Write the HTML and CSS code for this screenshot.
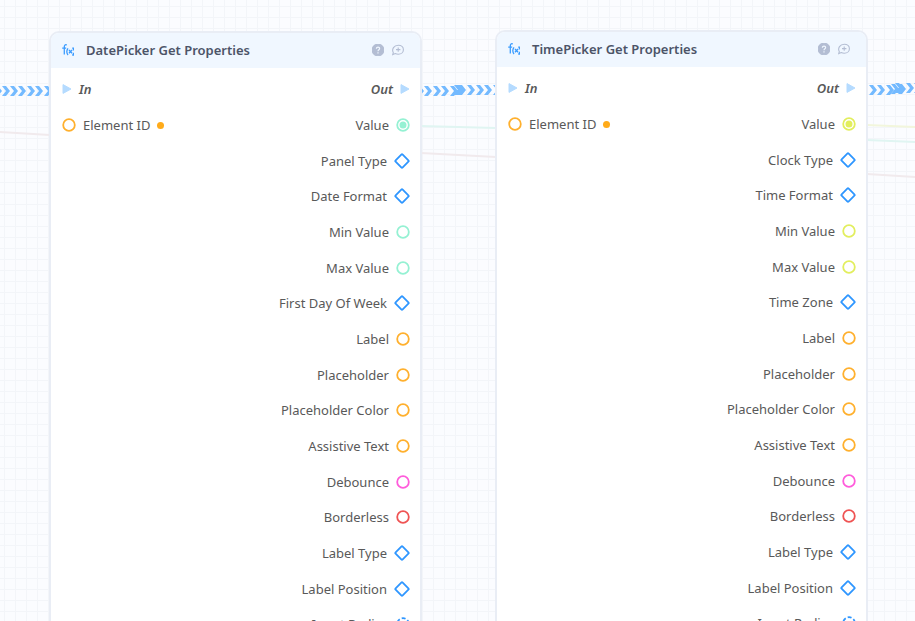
FILE: index.html
```
<!DOCTYPE html>
<html lang="en">
    <head>
        <meta charset="UTF-8">
        <meta name="viewport" content="width=device-width, initial-scale=1.0">
        <title>Blueprint</title>
        <link rel="stylesheet" href="styles.css">
    </head>
    <body>
        <!-- shared icons -->
        <svg class="defs" aria-hidden="true">
            <symbol id="fx" viewBox="0 0 12 12">
                <path d="M4.8.9C2.9.4 2.3 1.4 2.3 2.8v7.6M.2 4.2h4M6 4.4c-1.3 1.8-1.3 4.8 0 6.6M10.2 4.2h1.2v2.2M10.2 11h1.2V8.8M7 6l3 3.2M10 6l-3 3.2"/>
            </symbol>
            <symbol id="help" viewBox="0 0 12 12">
                <circle cx="6" cy="6" r="5.8" fill="#b3bdd3"/>
                <path d="M4.4 4.8C4.4 2.6 7.7 2.7 7.6 4.7 7.5 5.8 6 5.8 6 7.2M6 8.2v1.2" fill="none" stroke="#f0f7ff" stroke-width="1.2"/>
            </symbol>
            <symbol id="comment" viewBox="0 0 12 12">
                <path d="M.7 10.6l.6-2C-.6 5.2 2 1.2 6.3 1.2c3 0 5.1 2 5.1 4.5s-2.1 4.5-5.1 4.5c-1.3 0-2.2-.2-3-.6zM6.2 3.4v4.4M4 5.6h4.4"/>
            </symbol>
            <symbol id="flow" viewBox="0 0 10 12">
                <path d="M1 1.6v8.8L9 6z" fill="#b5dbff" stroke="#b5dbff" stroke-linejoin="round"/>
            </symbol>
            <symbol id="ring" viewBox="0 0 14 14">
                <circle cx="7" cy="7" r="5.8"/>
            </symbol>
            <symbol id="linked" viewBox="0 0 14 14">
                <circle cx="7" cy="7" r="5.8"/>
                <circle cx="7" cy="7" r="2.6" fill="currentColor"/>
            </symbol>
            <symbol id="diamond" viewBox="0 0 16 16">
                <rect x="3" y="3" width="10" height="10" rx="1" transform="rotate(45 8 8)"/>
            </symbol>
            <symbol id="dashed" viewBox="0 0 14 14">
                <circle cx="7" cy="7" r="5.8" stroke-dasharray="4 2.07" stroke-dashoffset="-1"/>
            </symbol>
        </svg>

        <main class="canvas">
            <svg class="wires" width="915" height="621" aria-hidden="true">
                <g class="links">
                    <path d="M0 132l50 3M421 153l75 4M867 174l48 3" stroke="#f1eaed"/>
                    <path d="M421 126l75 2M867 140l48 2" stroke="#e0f5f2"/>
                    <path d="M867 125l48 2" stroke="#f2f6dc"/>
                </g>
                <g class="chevrons">
                    <path d="M-6 86h4l4 5-4 5h-4l4-5zM2 86h4l4 5-4 5h-4l4-5zM10 86h4l4 5-4 5h-4l4-5zM18 86h4l4 5-4 5h-4l4-5zM27 86h4l4 5-4 5h-4l4-5zM35 86h4l4 5-4 5h-4l4-5zM44 86h4l4 5-4 5h-4l4-5z"/>
                    <path d="M416 86h4l4 5-4 5h-4l4-5zM424 86h4l4 5-4 5h-4l4-5zM433 86h4l4 5-4 5h-4l4-5zM441 86h4l4 5-4 5h-4l4-5zM450 86h4l4 5-4 5h-4l4-5zM454 85h4l4 5-4 5h-4l4-5zM458 85h4l4 5-4 5h-4l4-5zM467 85h4l4 5-4 5h-4l4-5zM476 85h4l4 5-4 5h-4l4-5zM484 85h4l4 5-4 5h-4l4-5zM493 85h4l4 5-4 5h-4l4-5z"/>
                    <path d="M869 85h4l4 5-4 5h-4l4-5zM877 85h4l4 5-4 5h-4l4-5zM886 85h4l4 5-4 5h-4l4-5zM891 84h4l4 5-4 5h-4l4-5zM895 83h4l4 5-4 5h-4l4-5zM898 84h4l4 5-4 5h-4l4-5zM906 83h4l4 5-4 5h-4l4-5zM914 83h4l4 5-4 5h-4l4-5z"/>
                </g>
            </svg>

            <section class="node date-node">
                <header class="node-header">
                    <svg class="fx"><use href="#fx"/></svg>
                    <h2>DatePicker Get Properties</h2>
                    <button class="tool" aria-label="Help"><svg><use href="#help"/></svg></button>
                    <button class="tool" aria-label="Add comment"><svg><use href="#comment"/></svg></button>
                </header>
                <div class="ports">
                    <ul class="inputs">
                        <li class="exec"><svg class="arrow"><use href="#flow"/></svg>In</li>
                        <li class="orange"><svg class="pin"><use href="#ring"/></svg>Element ID<span class="dot"></span></li>
                    </ul>
                    <ul class="outputs">
                        <li class="exec">Out<svg class="arrow"><use href="#flow"/></svg></li>
                        <li class="mint">Value<svg class="pin"><use href="#linked"/></svg></li>
                        <li class="blue">Panel Type<svg class="pin wide"><use href="#diamond"/></svg></li>
                        <li class="blue">Date Format<svg class="pin wide"><use href="#diamond"/></svg></li>
                        <li class="mint">Min Value<svg class="pin"><use href="#ring"/></svg></li>
                        <li class="mint">Max Value<svg class="pin"><use href="#ring"/></svg></li>
                        <li class="blue">First Day Of Week<svg class="pin wide"><use href="#diamond"/></svg></li>
                        <li class="orange">Label<svg class="pin"><use href="#ring"/></svg></li>
                        <li class="orange">Placeholder<svg class="pin"><use href="#ring"/></svg></li>
                        <li class="orange">Placeholder Color<svg class="pin"><use href="#ring"/></svg></li>
                        <li class="orange">Assistive Text<svg class="pin"><use href="#ring"/></svg></li>
                        <li class="pink">Debounce<svg class="pin"><use href="#ring"/></svg></li>
                        <li class="red">Borderless<svg class="pin"><use href="#ring"/></svg></li>
                        <li class="blue">Label Type<svg class="pin wide"><use href="#diamond"/></svg></li>
                        <li class="blue">Label Position<svg class="pin wide"><use href="#diamond"/></svg></li>
                        <li class="blue">Input Radius<svg class="pin"><use href="#dashed"/></svg></li>
                    </ul>
                </div>
            </section>

            <section class="node time-node">
                <header class="node-header">
                    <svg class="fx"><use href="#fx"/></svg>
                    <h2>TimePicker Get Properties</h2>
                    <button class="tool" aria-label="Help"><svg><use href="#help"/></svg></button>
                    <button class="tool" aria-label="Add comment"><svg><use href="#comment"/></svg></button>
                </header>
                <div class="ports">
                    <ul class="inputs">
                        <li class="exec"><svg class="arrow"><use href="#flow"/></svg>In</li>
                        <li class="orange"><svg class="pin"><use href="#ring"/></svg>Element ID<span class="dot"></span></li>
                    </ul>
                    <ul class="outputs">
                        <li class="exec">Out<svg class="arrow"><use href="#flow"/></svg></li>
                        <li class="lime">Value<svg class="pin"><use href="#linked"/></svg></li>
                        <li class="blue">Clock Type<svg class="pin wide"><use href="#diamond"/></svg></li>
                        <li class="blue">Time Format<svg class="pin wide"><use href="#diamond"/></svg></li>
                        <li class="lime">Min Value<svg class="pin"><use href="#ring"/></svg></li>
                        <li class="lime">Max Value<svg class="pin"><use href="#ring"/></svg></li>
                        <li class="blue">Time Zone<svg class="pin wide"><use href="#diamond"/></svg></li>
                        <li class="orange">Label<svg class="pin"><use href="#ring"/></svg></li>
                        <li class="orange">Placeholder<svg class="pin"><use href="#ring"/></svg></li>
                        <li class="orange">Placeholder Color<svg class="pin"><use href="#ring"/></svg></li>
                        <li class="orange">Assistive Text<svg class="pin"><use href="#ring"/></svg></li>
                        <li class="pink">Debounce<svg class="pin"><use href="#ring"/></svg></li>
                        <li class="red">Borderless<svg class="pin"><use href="#ring"/></svg></li>
                        <li class="blue">Label Type<svg class="pin wide"><use href="#diamond"/></svg></li>
                        <li class="blue">Label Position<svg class="pin wide"><use href="#diamond"/></svg></li>
                        <li class="blue">Input Radius<svg class="pin"><use href="#dashed"/></svg></li>
                    </ul>
                </div>
            </section>
        </main>
    </body>
</html>
```
FILE: styles.css
```
* {
    box-sizing: border-box;
}

body {
    margin: 0;
    font-family: "Noto Sans", sans-serif;
    font-size: 13px;
    font-weight: 400;
    line-height: 20px;
    color: #595959;
}

.defs {
    position: absolute;
    width: 0;
    height: 0;
}

.canvas {
    position: relative;
    height: 100vh;
    overflow: hidden;
    background-color: #fbfcff;
    background-image:
        linear-gradient(#f3f5f9 1px, transparent 1px),
        linear-gradient(90deg, #f3f5f9 1px, transparent 1px);
    background-size: 11px 11px;
    background-position: 4px 6px;
}

.wires {
    position: absolute;
    top: 0;
    left: 0;
    fill: none;
}

.links {
    stroke-width: 2;
}

.chevrons {
    fill: #74baff;
}

/* nodes are placed freely on the canvas */
.node {
    position: absolute;
    width: 373px;
    border: 2px solid #e9edf5;
    border-radius: 10px;
    background-color: #fff;
    overflow: hidden;
}

.date-node {
    left: 49px;
    top: 31px;
}

.time-node {
    left: 495px;
    top: 30px;
}

.node-header {
    display: flex;
    align-items: center;
    gap: 8px;
    height: 35px;
    padding: 0 16px 2px 11px;
    background-color: #f0f7ff;
}

.node-header h2 {
    flex: 1;
    margin: 0 0 0 4px;
    font-size: 13px;
    font-weight: 600;
    color: #4c5468;
}

.fx {
    width: 12px;
    height: 12px;
    fill: none;
    stroke: #3b9cff;
    stroke-width: 1.3;
}

.tool {
    display: flex;
    padding: 0;
    border: none;
    background: none;
}

.tool svg {
    width: 12px;
    height: 12px;
    fill: none;
    stroke: #b3bdd3;
    stroke-width: 1.1;
}

.ports {
    display: flex;
    justify-content: space-between;
    padding: 3px 10px 3px 11px;
}

.inputs,
.outputs {
    display: grid;
    grid-auto-rows: 36px 36px 35px;
    align-content: start;
    margin: 0;
    padding: 0;
    list-style: none;
}

.inputs li,
.outputs li {
    display: flex;
    align-items: center;
    gap: 7px;
}

.outputs li {
    justify-content: flex-end;
}

.inputs .exec,
.outputs .exec {
    font-weight: 600;
    font-style: italic;
}

.arrow {
    width: 10px;
    height: 12px;
}

.pin {
    width: 14px;
    height: 14px;
    fill: none;
    stroke: currentColor;
    stroke-width: 1.8;
}

.wide {
    width: 16px;
    height: 16px;
}

.dot {
    width: 7px;
    height: 7px;
    border-radius: 50%;
    background-color: #ffab1a;
}

.orange .pin {
    color: #ffb02e;
}

.mint .pin {
    color: #95f1d3;
}

.lime .pin {
    color: #e2ee5e;
}

.blue .pin {
    color: #2e96ff;
}

.pink .pin {
    color: #ff5cdb;
}

.red .pin {
    color: #ef5454;
}
```
